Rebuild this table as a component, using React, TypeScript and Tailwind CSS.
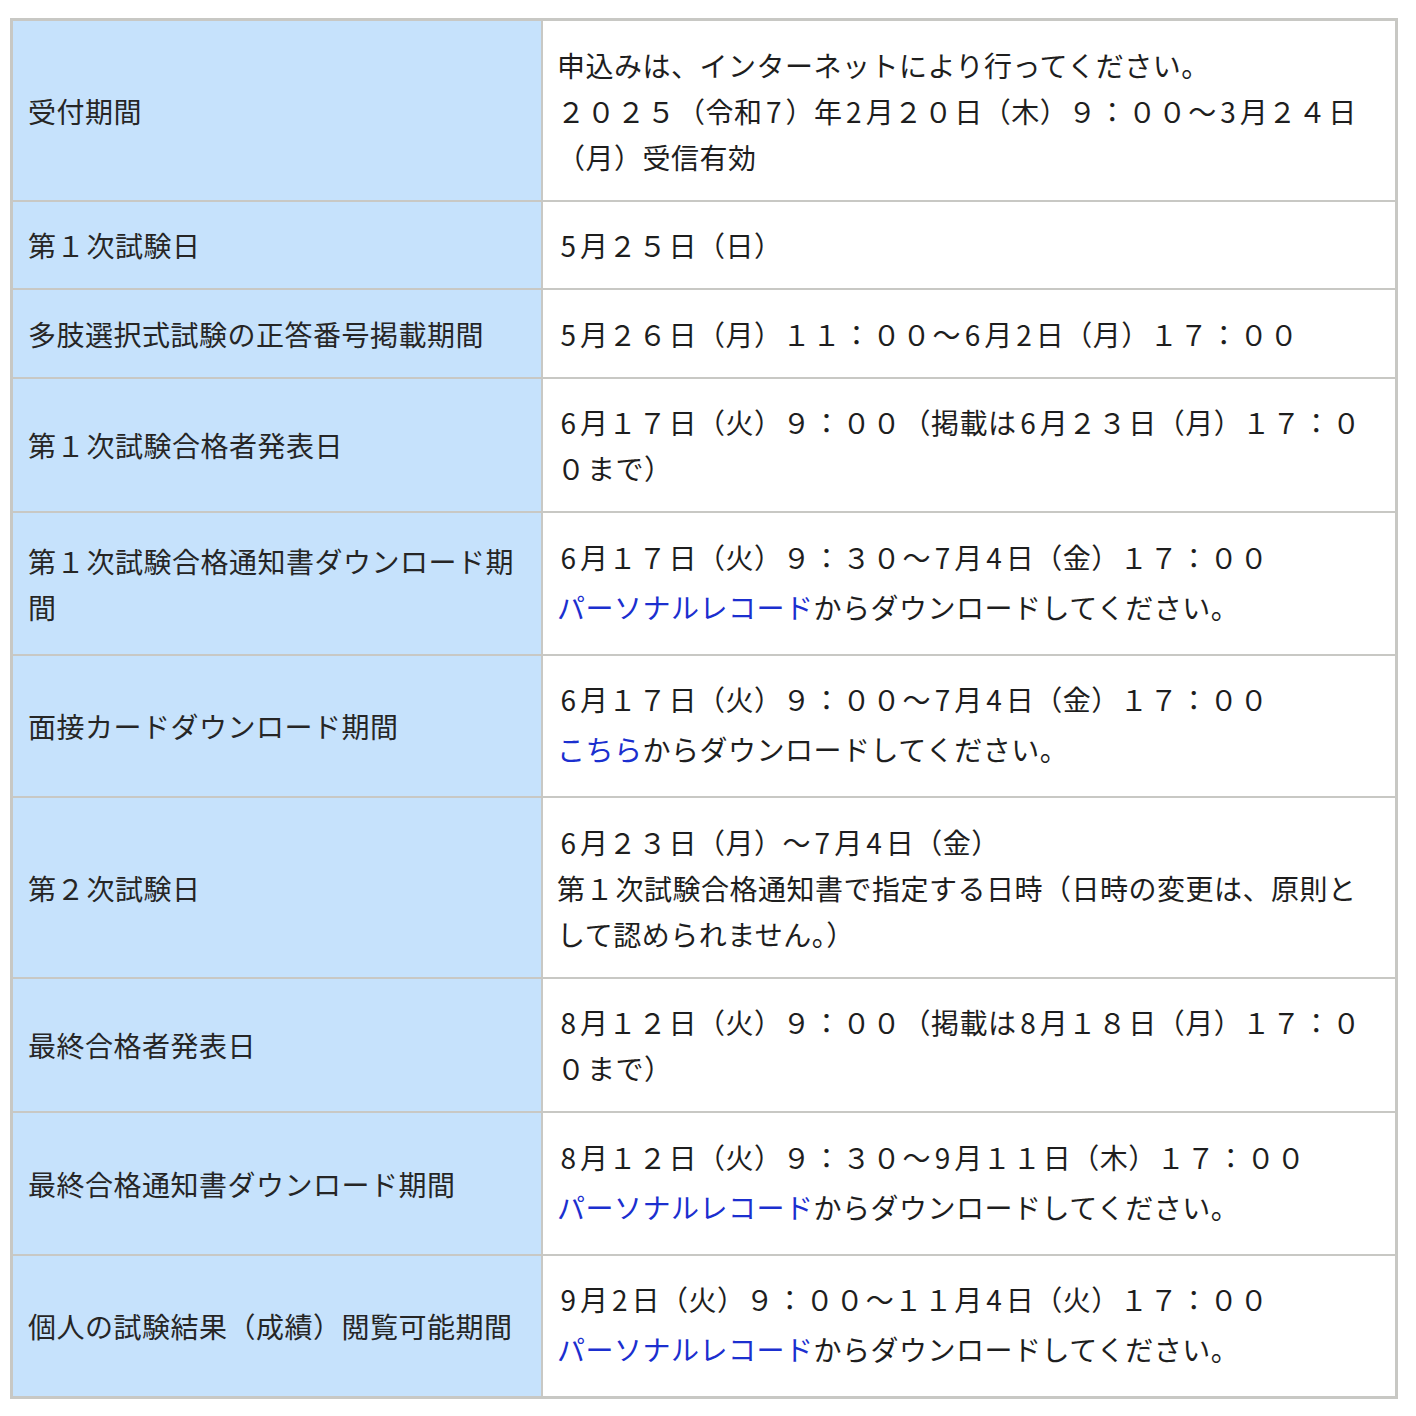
import React from "react";

function W({ t }: { t: string }) {
  const parts = t.split(/([０-９：]+|[0-9]+)/);
  return (
    <>
      {parts.map((p, i) =>
        /[０-９：]/.test(p) ? (
          <span key={i} className="tracking-[2px]">
            {p}
          </span>
        ) : /[0-9]/.test(p) ? (
          <span key={i} className="px-[3.5px]">
            {p}
          </span>
        ) : (
          <span key={i}>{p}</span>
        )
      )}
    </>
  );
}

type Line = string | { link: string; rest: string };

type Row = { label: string[]; lines: Line[] };

const rows: Row[] = [
  {
    label: ["受付期間"],
    lines: [
      "申込みは、インターネットにより行ってください。",
      "２０２５（令和7）年2月２０日（木）９：００～3月２４日",
      "（月）受信有効",
    ],
  },
  { label: ["第１次試験日"], lines: ["5月２５日（日）"] },
  {
    label: ["多肢選択式試験の正答番号掲載期間"],
    lines: ["5月２６日（月）１１：００～6月2日（月）１７：００"],
  },
  {
    label: ["第１次試験合格者発表日"],
    lines: ["6月１７日（火）９：００（掲載は6月２３日（月）１７：０", "０まで）"],
  },
  {
    label: ["第１次試験合格通知書ダウンロード期", "間"],
    lines: [
      "6月１７日（火）９：３０～7月4日（金）１７：００",
      { link: "パーソナルレコード", rest: "からダウンロードしてください。" },
    ],
  },
  {
    label: ["面接カードダウンロード期間"],
    lines: [
      "6月１７日（火）９：００～7月4日（金）１７：００",
      { link: "こちら", rest: "からダウンロードしてください。" },
    ],
  },
  {
    label: ["第２次試験日"],
    lines: [
      "6月２３日（月）～7月4日（金）",
      "第１次試験合格通知書で指定する日時（日時の変更は、原則と",
      "して認められません。）",
    ],
  },
  {
    label: ["最終合格者発表日"],
    lines: ["8月１２日（火）９：００（掲載は8月１８日（月）１７：０", "０まで）"],
  },
  {
    label: ["最終合格通知書ダウンロード期間"],
    lines: [
      "8月１２日（火）９：３０～9月１１日（木）１７：００",
      { link: "パーソナルレコード", rest: "からダウンロードしてください。" },
    ],
  },
  {
    label: ["個人の試験結果（成績）閲覧可能期間"],
    lines: [
      "9月2日（火）９：００～１１月4日（火）１７：００",
      { link: "パーソナルレコード", rest: "からダウンロードしてください。" },
    ],
  },
];

export default function App() {
  return (
    <div className="min-h-[1416px] bg-white pt-[18px] pl-[10px] font-['Noto_Sans_CJK_JP',sans-serif] text-[28px] leading-[46px] tracking-[0.5px] text-[#1e1e1e]">
      <div className="w-[1388px] border-[3px] border-[#c8c8c4]">
        {rows.map((r, i) => (
          <div
            key={i}
            className={
              "grid grid-cols-[530px_1fr] " +
              (i > 0 ? "border-t-2 border-[#c8c8c4]" : "")
            }
          >
            <div className="flex flex-col justify-center border-r-2 border-[#c8c8c4] bg-[#c6e2fc] px-[15px] pt-[20.5px] pb-5 text-[#262626]">
              {r.label.map((l, j) => (
                <div key={j} className="whitespace-nowrap">
                  <W t={l} />
                </div>
              ))}
            </div>
            <div className="flex flex-col justify-center bg-white px-[14px] pt-[20.5px] pb-5">
              {r.lines.map((l, j) =>
                typeof l === "string" ? (
                  <div key={j} className="whitespace-nowrap">
                    <W t={l} />
                  </div>
                ) : (
                  <div key={j} className="whitespace-nowrap py-1">
                    <a className="text-[#1b2fcf]">{l.link}</a>
                    <span>{l.rest}</span>
                  </div>
                )
              )}
            </div>
          </div>
        ))}
      </div>
    </div>
  );
}
